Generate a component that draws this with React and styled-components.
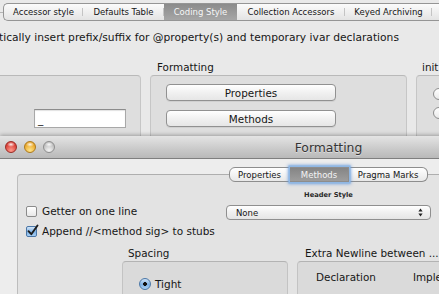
import styled, { createGlobalStyle } from "styled-components";

const GlobalStyle = createGlobalStyle`
  html, body { margin: 0; padding: 0; }
  body {
    background: #e9e9e9;
    font-family: "DejaVu Sans", "Lucida Grande", sans-serif;
    color: #161616;
  }
`;

const Screen = styled.div`
  position: relative;
  width: 439px;
  height: 294px;
  overflow: hidden;
  background: #e9e9e9;
`;

/* ---------- back window (preferences) ---------- */

const BackWindow = styled.div`
  position: absolute;
  top: 0;
  left: 0;
  width: 480px;
  height: 140px;
  display: flex;
  flex-direction: column;
  background: #e9e9e9;
`;

const TabStrip = styled.div`
  position: relative;
  display: flex;
  height: 18px;
  margin: 3px 0 0 3px;

  &::before {
    content: "";
    position: absolute;
    left: -3px;
    top: 9px;
    width: 4px;
    border-top: 1px solid #b4b4b4;
  }
`;

const StripTab = styled.div`
  position: relative;
  flex-shrink: 0;
  box-sizing: border-box;
  width: ${(p) => p.$w}px;
  height: 18px;
  display: flex;
  align-items: center;
  justify-content: center;
  font-size: 8.5px;
  white-space: nowrap;
  border-top: 1px solid #959595;
  border-bottom: 1px solid #959595;
  color: ${(p) => (p.$active ? "#f6f6f6" : "#151515")};
  background: ${(p) =>
    p.$active
      ? "linear-gradient(#8b8b8b, #a6a6a6)"
      : "linear-gradient(#fbfbfb, #e3e3e3)"};

  &:first-child {
    border-left: 1px solid #959595;
    border-radius: 5px 0 0 5px;
  }

  &:not(:last-child)::after {
    content: "";
    position: absolute;
    right: 0;
    top: 4px;
    bottom: 4px;
    width: 1px;
    background: ${(p) => (p.$active ? "transparent" : "#c4c4c4")};
  }
`;

const Description = styled.p`
  margin: 10px 0 0 -1px;
  font-size: 10.7px;
  line-height: 14px;
  white-space: nowrap;
`;

const BoxesRow = styled.div`
  display: flex;
  gap: 9px;
  margin-top: 16px;
`;

const Column = styled.div`
  display: flex;
  flex-direction: column;
  flex-shrink: 0;
  width: ${(p) => p.$w}px;
  margin-left: ${(p) => p.$shift || 0}px;
`;

const GroupLabel = styled.div`
  height: 12px;
  line-height: 12px;
  font-size: 10.4px;
  padding-left: ${(p) => p.$indent || 0}px;
  white-space: nowrap;
`;

const GroupBox = styled.div`
  box-sizing: border-box;
  height: 80px;
  margin-top: 2px;
  background: #dedede;
  border: 1px solid #c6c6c6;
  border-top-color: #b9b9b9;
  border-radius: 4px;
  display: flex;
  flex-direction: column;
  align-items: flex-start;
  padding: ${(p) => p.$pad || "0"};
`;

const TextField = styled.div`
  box-sizing: border-box;
  width: 92px;
  height: 19px;
  background: #fff;
  border: 1px solid #a8a8a8;
  border-top-color: #8c8c8c;
  box-shadow: inset 0 1px 1px rgba(0, 0, 0, 0.12);
  font-size: 10.5px;
  line-height: 19px;
  padding-left: 3px;
`;

const PushButton = styled.div`
  box-sizing: border-box;
  width: 170px;
  height: 17px;
  display: flex;
  align-items: center;
  justify-content: center;
  font-size: 10.4px;
  background: linear-gradient(#ffffff, #f1f1f1 50%, #e6e6e6);
  border: 1px solid #919191;
  border-radius: 4px;
  box-shadow: 0 1px 0 rgba(0, 0, 0, 0.06);
`;

const ButtonStack = styled.div`
  display: flex;
  flex-direction: column;
  gap: 9px;
`;

const RadioStack = styled.div`
  display: flex;
  flex-direction: column;
  gap: 7px;
`;

const Radio = styled.span`
  box-sizing: border-box;
  width: 12px;
  height: 12px;
  flex-shrink: 0;
  border-radius: 50%;
  border: 1px solid ${(p) => (p.$on ? "#4b78a8" : "#8d8d8d")};
  background: ${(p) =>
    p.$on
      ? "radial-gradient(circle, #111 0 1.6px, transparent 2.2px), linear-gradient(#cfe3f7, #7fb2e6 55%, #a9d0f5)"
      : "linear-gradient(#ffffff, #e9e9e9)"};
`;

/* ---------- front window (Formatting panel) ---------- */

const FrontWindow = styled.div`
  position: absolute;
  top: 136px;
  left: 0;
  width: 657px;
  height: 200px;
  background: #ededed;
  box-shadow: 0 -1px 4px rgba(0, 0, 0, 0.3);
`;

const TitleBar = styled.div`
  box-sizing: border-box;
  height: 23px;
  display: flex;
  align-items: center;
  background: linear-gradient(#e4e4e4, #c9c9c9 60%, #b9b9b9);
  border-bottom: 1px solid #7f7f7f;
`;

const Lights = styled.div`
  box-sizing: border-box;
  width: 56px;
  padding-left: 5px;
  display: flex;
  gap: 7px;
`;

const Light = styled.span`
  box-sizing: border-box;
  width: 12px;
  height: 12px;
  border-radius: 50%;
  border: 1px solid ${(p) => p.$edge};
  background:
    radial-gradient(ellipse 4px 2.5px at 50% 24%, rgba(255, 255, 255, 0.9), transparent),
    radial-gradient(circle at 50% 85%, ${(p) => p.$glow} 0%, ${(p) => p.$base} 70%);
`;

const Title = styled.div`
  flex: 1;
  margin-right: 56px;
  text-align: center;
  font-size: 12.4px;
  color: #353535;
  text-shadow: 0 1px 0 rgba(255, 255, 255, 0.45);
`;

const TabView = styled.div`
  margin: 8px 17px 0;
  display: flex;
  flex-direction: column;
`;

const SegmentRow = styled.div`
  position: relative;
  z-index: 1;
  display: flex;
  justify-content: center;
  height: 15px;
  margin-bottom: -8px;
`;

const Segment = styled.div`
  box-sizing: border-box;
  width: ${(p) => p.$w}px;
  height: 15px;
  display: flex;
  align-items: center;
  justify-content: center;
  font-size: 8.5px;
  white-space: nowrap;
  border: 1px solid #8d8d8d;
  border-left: none;
  color: ${(p) => (p.$active ? "#f4f4f4" : "#151515")};
  background: ${(p) =>
    p.$active
      ? "linear-gradient(#858585, #9d9d9d)"
      : "linear-gradient(#ffffff, #e8e8e8)"};
  box-shadow: ${(p) =>
    p.$active ? "0 0 0 1.5px #8fb7e4, 0 0 3px 2px rgba(95, 150, 220, 0.8)" : "none"};
  position: relative;
  z-index: ${(p) => (p.$active ? 1 : 0)};

  &:first-child {
    border-left: 1px solid #8d8d8d;
    border-radius: 6px 0 0 6px;
  }
  &:last-child {
    border-radius: 0 6px 6px 0;
  }
`;

const TabBox = styled.div`
  box-sizing: border-box;
  height: 150px;
  background: #e3e3e3;
  border: 1px solid #bdbdbd;
  border-top-color: #aeaeae;
  border-radius: 4px;
`;

const TopSection = styled.div`
  display: flex;
`;

const CheckColumn = styled.div`
  width: 200px;
  margin-left: 8px;
  padding-top: 29px;
  display: flex;
  flex-direction: column;
  gap: 6px;
`;

const CheckRow = styled.label`
  display: flex;
  align-items: center;
  gap: 5px;
  height: 14px;
  font-size: 10.5px;
  white-space: nowrap;
`;

const CheckBox = styled.span`
  position: relative;
  box-sizing: border-box;
  width: 11px;
  height: 11px;
  flex-shrink: 0;
  border-radius: 2px;
  border: 1px solid ${(p) => (p.$on ? "#4a76a6" : "#8b8b8b")};
  background: ${(p) =>
    p.$on
      ? "linear-gradient(#d2e5f8, #80b3e6 55%, #a7cff5)"
      : "linear-gradient(#ffffff, #e8e8e8)"};

  svg {
    position: absolute;
    left: -1px;
    top: -3px;
    overflow: visible;
  }
`;

const HeaderColumn = styled.div`
  width: 205px;
  padding-top: 15px;
  display: flex;
  flex-direction: column;
  align-items: center;
`;

const TinyLabel = styled.div`
  height: 10px;
  line-height: 10px;
  font-size: 6.7px;
  font-weight: bold;
  color: #2a2a2a;
  margin-bottom: 5px;
`;

const PopUp = styled.div`
  box-sizing: border-box;
  width: 205px;
  height: 15px;
  display: flex;
  align-items: center;
  justify-content: space-between;
  padding: 0 7px 0 9px;
  font-size: 8.5px;
  background: linear-gradient(#ffffff, #f0f0f0 50%, #e5e5e5);
  border: 1px solid #8f8f8f;
  border-radius: 4px;
`;

const BottomRow = styled.div`
  display: flex;
  gap: 9px;
  margin: 9px 0 0 104px;
`;

const InnerBox = styled.div`
  box-sizing: border-box;
  height: 60px;
  margin-top: 2px;
  background: #dadada;
  border: 1px solid #c3c3c3;
  border-top-color: #b3b3b3;
  border-radius: 4px;
  display: flex;
  align-items: flex-start;
  gap: ${(p) => p.$gap || 0}px;
  padding: ${(p) => p.$pad};
`;

const RadioRow = styled.div`
  display: flex;
  align-items: center;
  gap: 4px;
  font-size: 10.5px;
`;

const ColumnHead = styled.div`
  font-size: 10.4px;
  line-height: 14px;
  white-space: nowrap;
`;

const stripTabs = [
  ["Accessor style", 80],
  ["Defaults Table", 81],
  ["Coding Style", 73, true],
  ["Collection Accessors", 108],
  ["Keyed Archiving", 87],
  ["", 60],
];

const panelTabs = [
  ["Properties", 61],
  ["Methods", 59, true],
  ["Pragma Marks", 79],
];

function Check() {
  return (
    <svg width="13" height="13" viewBox="0 0 13 13">
      <path
        d="M2.5 7.2 L5.3 10.2 L11.5 1.5"
        fill="none"
        stroke="#1d1d1d"
        strokeWidth="1.9"
        strokeLinecap="round"
        strokeLinejoin="round"
      />
    </svg>
  );
}

function Arrows() {
  return (
    <svg width="5" height="9" viewBox="0 0 5 9">
      <path d="M2.5 0.5 L4.6 3.4 L0.4 3.4 Z" fill="#222" />
      <path d="M2.5 8.5 L4.6 5.6 L0.4 5.6 Z" fill="#222" />
    </svg>
  );
}

export default function App() {
  return (
    <>
      <GlobalStyle />
      <Screen>
        <BackWindow>
          <TabStrip>
            {stripTabs.map(([label, w, active]) => (
              <StripTab key={label || "more"} $w={w} $active={active}>
                {label}
              </StripTab>
            ))}
          </TabStrip>
          <Description>
            tically insert prefix/suffix for @property(s) and temporary ivar declarations
          </Description>
          <BoxesRow>
            <Column $w={151} $shift={-10}>
              <GroupLabel />
              <GroupBox $pad="33px 0 0 43px">
                <TextField>_</TextField>
              </GroupBox>
            </Column>
            <Column $w={257}>
              <GroupLabel $indent={7}>Formatting</GroupLabel>
              <GroupBox $pad="8px 0 0 15px">
                <ButtonStack>
                  <PushButton>Properties</PushButton>
                  <PushButton>Methods</PushButton>
                </ButtonStack>
              </GroupBox>
            </Column>
            <Column $w={60}>
              <GroupLabel $indent={6}>init</GroupLabel>
              <GroupBox $pad="12px 0 0 16px">
                <RadioStack>
                  <Radio />
                  <Radio />
                </RadioStack>
              </GroupBox>
            </Column>
          </BoxesRow>
        </BackWindow>

        <FrontWindow>
          <TitleBar>
            <Lights>
              <Light $base="#d83b33" $glow="#ff9a8c" $edge="#9a2b25" />
              <Light $base="#e9a526" $glow="#ffe58a" $edge="#ad7a1c" />
              <Light $base="#bdbdbd" $glow="#f4f4f4" $edge="#8e8e8e" />
            </Lights>
            <Title>Formatting</Title>
          </TitleBar>

          <TabView>
            <SegmentRow>
              {panelTabs.map(([label, w, active]) => (
                <Segment key={label} $w={w} $active={active}>
                  {label}
                </Segment>
              ))}
            </SegmentRow>
            <TabBox>
              <TopSection>
                <CheckColumn>
                  <CheckRow>
                    <CheckBox />
                    Getter on one line
                  </CheckRow>
                  <CheckRow>
                    <CheckBox $on>
                      <Check />
                    </CheckBox>
                    Append //&lt;method sig&gt; to stubs
                  </CheckRow>
                </CheckColumn>
                <HeaderColumn>
                  <TinyLabel>Header Style</TinyLabel>
                  <PopUp>
                    None
                    <Arrows />
                  </PopUp>
                </HeaderColumn>
              </TopSection>

              <BottomRow>
                <Column $w={166}>
                  <GroupLabel $indent={6}>Spacing</GroupLabel>
                  <InnerBox $pad="16px 0 0 16px">
                    <RadioRow>
                      <Radio $on />
                      Tight
                    </RadioRow>
                  </InnerBox>
                </Column>
                <Column $w={300}>
                  <GroupLabel $indent={8}>Extra Newline between ...</GroupLabel>
                  <InnerBox $pad="8px 0 0 18px" $gap={37}>
                    <ColumnHead>Declaration</ColumnHead>
                    <ColumnHead>Implementation</ColumnHead>
                  </InnerBox>
                </Column>
              </BottomRow>
            </TabBox>
          </TabView>
        </FrontWindow>
      </Screen>
    </>
  );
}
